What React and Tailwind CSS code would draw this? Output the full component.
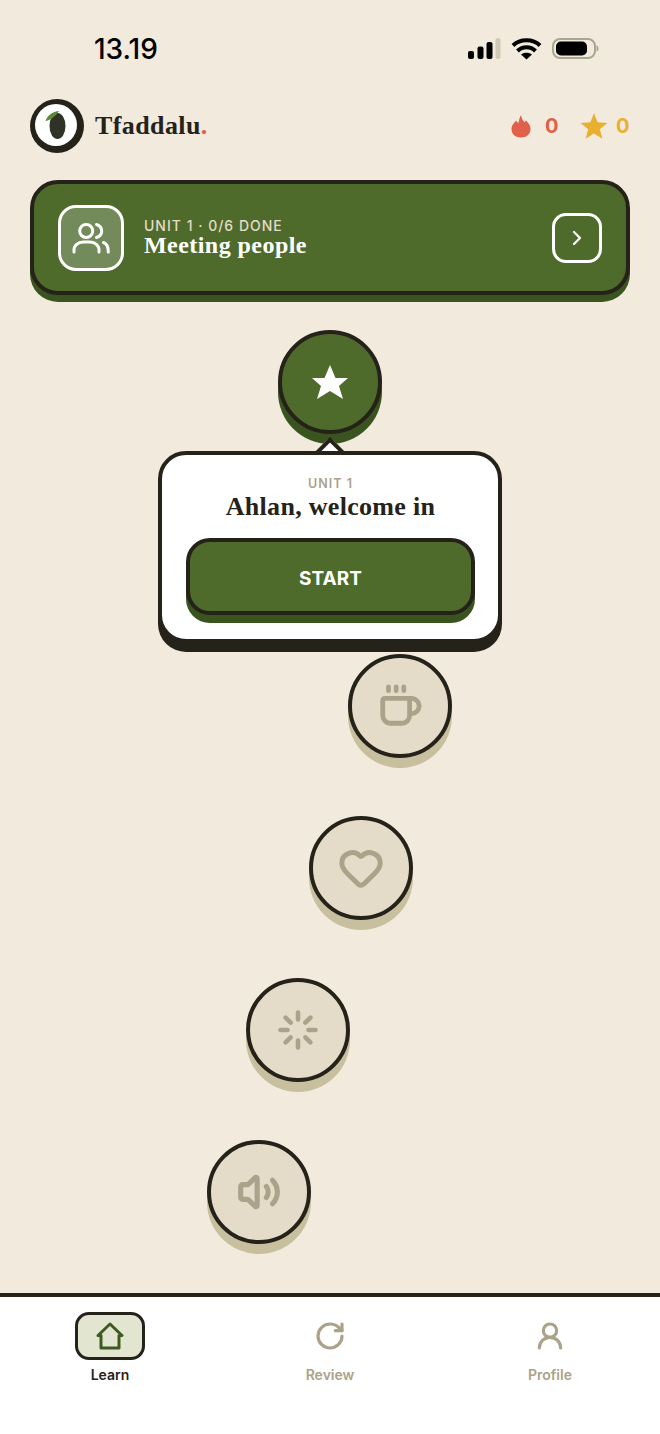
import React from "react";
import { ChevronRight, Coffee, Heart, Loader, Volume2, RotateCw, UserRound } from "lucide-react";

const sans = "font-['Inter','Liberation_Sans',sans-serif]";
const serif = "font-['Liberation_Serif',serif]";

function StatusBar() {
  return (
    <div className="h-[95px] shrink-0 flex items-start justify-between pt-[33px] pl-[94px] pr-[61px]">
      <span className={`${sans} text-[28px] leading-[32px] font-medium text-black`}>13.19</span>
      <svg width="132" height="24" viewBox="0 0 132 24" className="mt-[5px]">
        <rect x="1" y="13" width="6" height="8" rx="2" fill="#000" />
        <rect x="10.500" y="8.500" width="6" height="12.500" rx="2" fill="#000" />
        <rect x="19.500" y="4" width="6" height="17" rx="2" fill="#000" />
        <rect x="28.500" y="0" width="5" height="21" rx="2" fill="#cfcab8" />
        <path d="M46 7.500C53 0.500 66 0.500 73 7.500" stroke="#000" strokeWidth="4" fill="none" />
        <path d="M50.500 13C55.500 8 63.500 8 68.500 13" stroke="#000" strokeWidth="4" fill="none" />
        <path d="M54 16.500C57 14 62 14 65 16.500L59.500 21.500Z" fill="#000" />
        <rect x="86" y="1" width="42" height="19" rx="7" fill="none" stroke="#a9a78f" strokeWidth="2" />
        <rect x="89" y="3.500" width="31" height="14" rx="5" fill="#000" />
        <path d="M129.500 7.500C131 7.500 131.500 9 131.500 10.500C131.500 12 131 13.500 129.500 13.500Z" fill="#a9a78f" />
      </svg>
    </div>
  );
}

function Logo() {
  return (
    <svg width="54" height="54" viewBox="0 0 54 54" className="shrink-0">
      <circle cx="27" cy="27" r="27" fill="#25221a" />
      <circle cx="26" cy="26" r="21" fill="#fff" />
      <ellipse cx="27.500" cy="27" rx="8" ry="13" fill="#2e3326" />
      <path d="M15.500 22C17.500 16 23 12.500 29 12C26 17 21 21 15.500 22Z" fill="#5c8a35" />
    </svg>
  );
}

function Header() {
  return (
    <div className="h-[62px] shrink-0 pl-[30px] pr-[31px] flex items-center justify-between">
      <div className="flex items-center gap-[11px]">
        <Logo />
        <span className={`${serif} text-[26px] leading-none font-bold text-[#25221a] tracking-[0.4px]`}>
          Tfaddalu<span className="text-[#e0604a]">.</span>
        </span>
      </div>
      <div className={`${sans} flex items-center text-[20px] font-bold leading-none`}>
        <svg width="20" height="24" viewBox="0 0 20 24" className="mr-[14px]">
          <path d="M10 1C10.500 5 12 6.500 13.500 8.500C14 7.500 14.500 7 15 6.500C18 9.500 19.500 12 19.500 15C19.500 20 15.500 23.500 10 23.500C4.500 23.500 0.500 20 0.500 15C0.500 11 3.500 8.500 5.500 6.500C6 8 6.500 8.500 7.500 9C8 6 8.500 3.500 10 1Z" fill="#e0604a" />
        </svg>
        <span className="text-[#e0604a] w-[13px]">0</span>
        <svg width="28" height="26" viewBox="0 0 28 26" className="ml-[22px] mr-[8px]">
          <path d="M14 0L17.600 9.300L27.500 9.900L19.800 16.200L22.400 25.800L14 20.400L5.600 25.800L8.200 16.200L0.500 9.900L10.400 9.300Z" fill="#e8b030" />
        </svg>
        <span className="text-[#e8b030] w-[13px]">0</span>
      </div>
    </div>
  );
}

function UsersIcon() {
  return (
    <svg width="38" height="38" viewBox="0 0 38 38" fill="none" stroke="#fff" strokeWidth="3" strokeLinecap="round" strokeLinejoin="round">
      <circle cx="14.200" cy="12" r="6.500" />
      <path d="M24.500 5.500C27.500 6.500 29.700 9 29.700 12C29.700 15 27.500 17.500 24.500 18.500" />
      <path d="M2 33V31C2 26.500 6 23 11 23H18C23 23 27 26.500 27 31V33" />
      <path d="M31.500 23.500C34.500 24.500 36.300 28 36.300 33" />
    </svg>
  );
}

function Banner() {
  return (
    <div className="mx-[30px] mt-[23px] h-[115px] shrink-0 rounded-[28px] border-4 border-[#25221a] bg-[#4f6b2c] shadow-[0_7px_0_#3a5420] flex items-center pl-[24px] pr-[24px]">
      <div className="w-[66px] h-[66px] rounded-[18px] border-[3px] border-white bg-[#738a5a] flex items-center justify-center shrink-0">
        <UsersIcon />
      </div>
      <div className="ml-[20px] flex-1 min-w-0">
        <div className={`${sans} text-[14px] leading-[12px] font-medium tracking-[1px] text-[#e4dcc8] mt-[2px]`}>UNIT 1 · 0/6 DONE</div>
        <div className={`${serif} text-[24px] leading-[26px] font-bold text-white tracking-[0.45px]`}>Meeting people</div>
      </div>
      <div className="w-[50px] h-[50px] rounded-[14px] border-[3px] border-white flex items-center justify-center shrink-0">
        <ChevronRight size={24} color="#fff" strokeWidth={2.200} />
      </div>
    </div>
  );
}

function Node({ children, active, ml }) {
  return (
    <div
      style={{ marginLeft: ml }}
      className={`w-[104px] h-[104px] rounded-full border-[4px] border-[#25221a] flex items-center justify-center shrink-0 ${
        active ? "bg-[#4f6b2c] shadow-[0_10px_0_#3a5420]" : "bg-[#e4dcc8] shadow-[0_10px_0_#c8bf9f]"
      }`}
    >
      {children}
    </div>
  );
}

function Popover() {
  return (
    <>
      <div className="absolute left-[320px] top-[146px] w-[20px] h-[20px] rotate-45 z-[5] bg-white border-l-4 border-t-4 border-[#25221a]" />
      <div className="absolute left-[158px] top-[156px] w-[344px] h-[192px] z-10 rounded-[28px] border-4 border-[#25221a] bg-white shadow-[0_9px_0_#25221a] flex flex-col items-center pl-[24px] pr-[23px] pt-[22px]">
        <div className={`${sans} text-[12.500px] leading-[14px] font-semibold tracking-[1px] text-[#aba28a]`}>UNIT 1</div>
        <div className={`${serif} text-[26px] leading-[32px] font-bold text-[#25221a] tracking-[0.3px]`}>Ahlan, welcome in</div>
        <div className={`${sans} mt-[15px] w-full h-[77px] shrink-0 rounded-[24px] border-4 border-[#25221a] bg-[#4f6b2c] shadow-[0_8px_0_#3a5420] flex items-center justify-center pt-[5px] text-white text-[19px] font-bold`}>
          START
        </div>
      </div>
    </>
  );
}

function Path() {
  return (
    <div className="relative flex-1 min-h-0 flex flex-col items-start gap-[58px] pt-[35px] overflow-hidden">
      <div className="flex flex-col gap-[220px]">
        <Node active ml={278}>
          <svg width="36" height="34" viewBox="0 0 36 34">
            <path d="M18 0L23.500 13L36 13L27 21L31 34L18 26L5 34L9 21L0 13L12.500 13Z" fill="#fff" />
          </svg>
        </Node>
        <Node ml={348}><Coffee size={46} color="#aba28a" strokeWidth={2.500} /></Node>
      </div>
      <Node ml={309}><Heart size={46} color="#aba28a" strokeWidth={2.600} /></Node>
      <Node ml={246}><Loader size={42} color="#aba28a" strokeWidth={2.600} /></Node>
      <Node ml={207}><Volume2 size={44} color="#aba28a" strokeWidth={2.800} /></Node>
      <Popover />
    </div>
  );
}

function Tab({ icon, label, active }) {
  return (
    <div className="flex-1 flex flex-col items-center">
      <div className={`w-[70px] h-[48px] rounded-[14px] flex items-center justify-center ${active ? "border-[3px] border-[#25221a] bg-[#e2e6d0]" : ""}`}>
        {icon}
      </div>
      <span className={`${sans} mt-[5px] text-[14px] leading-[20px] font-semibold ${active ? "text-[#25221a]" : "text-[#aba28a]"}`}>{label}</span>
    </div>
  );
}

function BottomNav() {
  return (
    <div className="h-[141px] shrink-0 bg-white border-t-4 border-[#25221a] flex px-0 pt-[15px]">
      <Tab
        active
        label="Learn"
        icon={
          <svg width="28" height="28" viewBox="0 0 28 28" fill="none" stroke="#3f5a20" strokeWidth="3" strokeLinejoin="round" strokeLinecap="round">
            <path d="M2 13.500L14 2L26 13.500H23V26H5V13.500Z" />
          </svg>
        }
      />
      <Tab label="Review" icon={<RotateCw size={32} color="#aba28a" strokeWidth={2.400} />} />
      <Tab label="Profile" icon={<UserRound size={32} color="#aba28a" strokeWidth={2.400} />} />
    </div>
  );
}

export default function App() {
  return (
    <div className="w-[660px] h-[1434px] bg-[#f2eadd] flex flex-col overflow-hidden">
      <StatusBar />
      <Header />
      <Banner />
      <Path />
      <BottomNav />
    </div>
  );
}
